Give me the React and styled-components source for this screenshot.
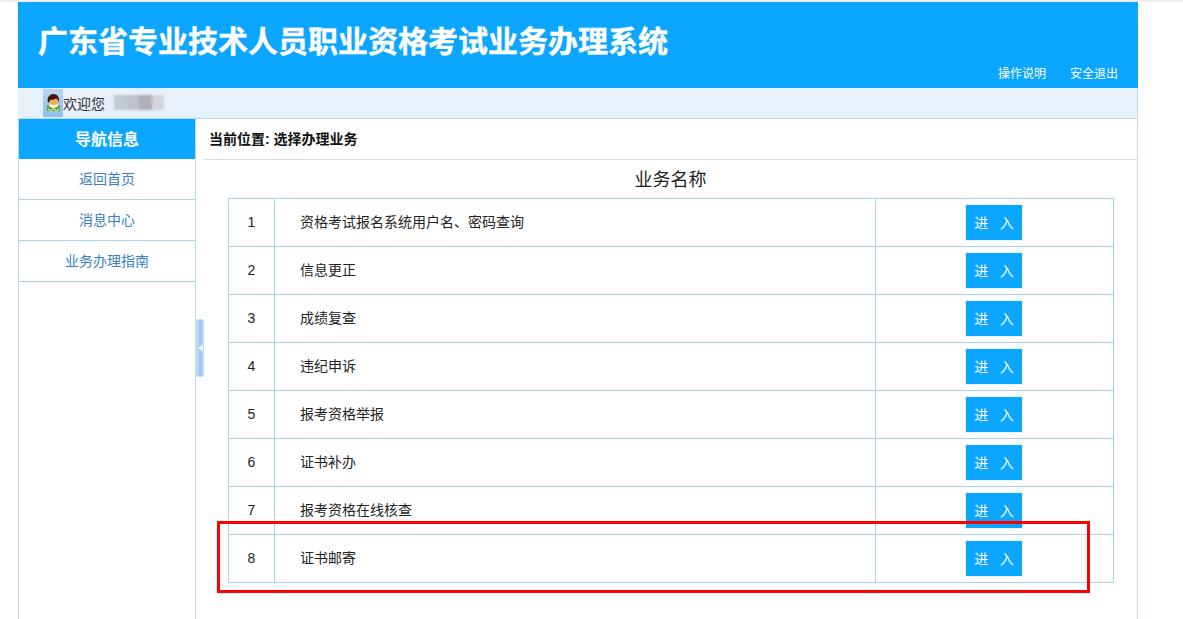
import React from "react";
import styled, { createGlobalStyle } from "styled-components";

const rows = [
  "资格考试报名系统用户名、密码查询",
  "信息更正",
  "成绩复查",
  "违纪申诉",
  "报考资格举报",
  "证书补办",
  "报考资格在线核查",
  "证书邮寄",
];

const navItems = ["返回首页", "消息中心", "业务办理指南"];

const GlobalStyle = createGlobalStyle`
  html, body {
    margin: 0;
    padding: 0;
    background: #fff;
    overflow: hidden;
  }
  body {
    font-family: "Liberation Sans", "Noto Sans CJK SC", sans-serif;
    color: #222;
  }
  * {
    box-sizing: border-box;
  }
`;

function Avatar() {
  return (
    <svg width="20" height="28" viewBox="0 0 20 28">
      <path d="M4 16h13v6H4z" fill="#5fa82f" />
      <path d="M5 20l2.500 1.500 3-1.500 3 1.500 2.500-1.500" fill="none" stroke="#f1f8e0" strokeWidth="1" />
      <path d="M7 15h7l1.500 2-5 2.500-5-2.500z" fill="#f7f3d0" />
      <ellipse cx="10.500" cy="11.500" rx="4.500" ry="4.500" fill="#f0ac55" />
      <path d="M5 14C3.500 8 7 5 10.500 5S17 8 16 14c-.5-2.500-1.500-4-3-4.500-2 1.500-4.500 1-5.500 1.500-.8 1-1.500 2-2.500 3z" fill="#4a140c" />
    </svg>
  );
}

function App() {
  return (
    <Page>
      <GlobalStyle />
      <Shell>
        <Header>
          <Title>广东省专业技术人员职业资格考试业务办理系统</Title>
          <HeaderLinks>
            <span>操作说明</span>
            <span>安全退出</span>
          </HeaderLinks>
        </Header>
        <WelcomeBar>
          <AvatarBox>
            <Avatar />
          </AvatarBox>
          欢迎您
          <BlurredName>
            <i />
            <i />
            <i />
            <i />
          </BlurredName>
        </WelcomeBar>
        <Body>
          <Sidebar>
            <NavHead>导航信息</NavHead>
            {navItems.map((item) => (
              <NavItem key={item}>{item}</NavItem>
            ))}
          </Sidebar>
          <Gutter>
            <Handle />
          </Gutter>
          <Main>
            <Breadcrumb>当前位置: 选择办理业务</Breadcrumb>
            <Heading>业务名称</Heading>
            <Table>
              <tbody>
                {rows.map((name, i) => (
                  <tr key={name}>
                    <NumCell>{i + 1}</NumCell>
                    <NameCell>{name}</NameCell>
                    <ActionCell>
                      <EnterButton>进&nbsp;&nbsp;&nbsp;入</EnterButton>
                    </ActionCell>
                  </tr>
                ))}
              </tbody>
            </Table>
          </Main>
        </Body>
      </Shell>
      <Highlight />
    </Page>
  );
}

const Page = styled.div`
  position: relative;
  height: 619px;
  padding-left: 18px;
  border-top: 2px solid #f0f0f0;
  overflow: hidden;
`;

const Shell = styled.div`
  width: 1120px;
`;

const Header = styled.header`
  height: 86px;
  background: #0aa6ff;
  color: #fff;
  padding: 20px 20px 0 20px;
`;

const Title = styled.h1`
  margin: 0;
  font-size: 30px;
  line-height: 40px;
  font-weight: bold;
  -webkit-text-stroke: 0.4px #fff;
`;

const HeaderLinks = styled.div`
  display: flex;
  justify-content: flex-end;
  gap: 24px;
  margin-top: 2px;
  font-size: 12px;
  line-height: 20px;
`;

const WelcomeBar = styled.div`
  display: flex;
  align-items: center;
  height: 31px;
  padding: 0 0 1px 25px;
  background: #e6f1fb;
  border-bottom: 1px solid #b5d8f0;
  border-right: 1px solid #c5dcee;
  font-size: 14px;
  color: #333;
`;

const AvatarBox = styled.div`
  width: 20px;
  height: 28px;
  background: linear-gradient(#b8d6f5, #8fbdf0);
`;

const BlurredName = styled.div`
  display: flex;
  margin-left: 9px;
  height: 15px;
  filter: blur(1px);

  i {
    display: block;
    width: 12.5px;
    background: #c4cad0;
  }
  i:nth-child(2) {
    background: #bcc2c8;
  }
  i:nth-child(3) {
    background: #b3adb5;
  }
  i:nth-child(4) {
    background: #d3d7da;
  }
`;

const Body = styled.div`
  display: flex;
  height: 500px;
  border-right: 1px solid #c5dcee;
`;

const Sidebar = styled.nav`
  width: 178px;
  flex: none;
  border-left: 1px solid #b5d8f0;
  border-right: 1px solid #b5d8f0;
`;

const NavHead = styled.div`
  height: 40px;
  background: #0aa6ff;
  color: #fff;
  font-size: 16px;
  font-weight: bold;
  line-height: 42px;
  text-align: center;
`;

const NavItem = styled.div`
  height: 41px;
  line-height: 40px;
  border-bottom: 1px solid #a6d3f0;
  color: #3a80c8;
  font-size: 14px;
  text-align: center;
`;

const Gutter = styled.div`
  flex: none;
  width: 8px;
  padding-top: 200px;
`;

const Handle = styled.div`
  position: relative;
  width: 8px;
  height: 58px;
  border: 1px solid #c6dcf2;
  border-radius: 2px;
  background: linear-gradient(90deg, #c3dcf5, #9cc5ee 50%, #b4d3f2);

  &::after {
    content: "";
    position: absolute;
    top: 24px;
    left: 1px;
    border: 4px solid transparent;
    border-left: 0;
    border-right: 5px solid #eef6fd;
  }
`;

const Main = styled.main`
  flex: 1;
  display: flex;
  flex-direction: column;
  align-items: flex-start;
`;

const Breadcrumb = styled.div`
  align-self: stretch;
  height: 41px;
  padding-left: 5px;
  border-bottom: 1px solid #dcdcdc;
  color: #111;
  font-size: 14px;
  font-weight: bold;
  line-height: 40px;
`;

const Heading = styled.div`
  width: 933px;
  height: 38px;
  color: #222;
  font-size: 18px;
  line-height: 40px;
  text-align: center;
`;

const Table = styled.table`
  width: 886px;
  margin-left: 24px;
  border-collapse: collapse;
  table-layout: fixed;
  font-size: 14px;
  color: #222;

  td {
    height: 48px;
    padding: 0 0 3px;
    border: 1px solid #a3d2f5;
  }
`;

const NumCell = styled.td`
  width: 46px;
  padding-bottom: 1px !important;
  text-align: center;
`;

const NameCell = styled.td`
  width: 601px;
  padding-left: 25px !important;
`;

const ActionCell = styled.td`
  padding: 0 !important;
`;

const EnterButton = styled.button`
  display: block;
  width: 58px;
  height: 37px;
  margin-left: 89px;
  padding: 0 0 2px;
  border: 1px solid #eaf6ff;
  background: #0aa6ff;
  color: #fff;
  font-family: inherit;
  font-size: 14px;
`;

const Highlight = styled.div`
  position: absolute;
  left: 217px;
  top: 519px;
  width: 873px;
  height: 72px;
  border: 3px solid #ff0000;
  pointer-events: none;
`;

export default App;
